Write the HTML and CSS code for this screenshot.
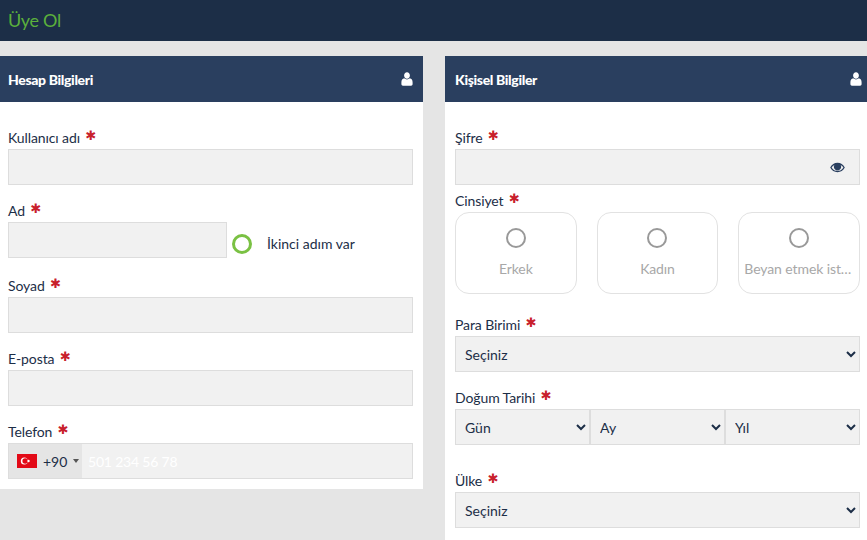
FILE: index.html
```html
<!DOCTYPE html>
<html lang="tr">
<head>
<meta charset="utf-8">
<title>Üye Ol</title>
<link rel="stylesheet" href="styles.css">
</head>
<body>
<header class="topbar"><h1 class="page-title">Üye Ol</h1></header>
<main class="columns">
  <section class="panel panel-left">
    <div class="panel-head"><h2 class="panel-title">Hesap Bilgileri</h2>
      <svg class="user-icon" viewBox="0 0 12 14"><path d="M6 0.3c1.700 0 2.900 1.400 2.900 3.200S7.700 6.800 6 6.800 3.100 5.300 3.100 3.500 4.300.3 6 .3zM3.300 6.300C4 7 5 7.500 6 7.500s2-.5 2.700-1.200c1.900.2 2.900 1.700 2.900 4.100v1.700c0 .9-.7 1.600-1.500 1.600H1.900C1.100 13.700.4 13 .4 12.100v-1.700c0-2.400 1-3.900 2.900-4.100z"/></svg>
    </div>
    <div class="panel-body">
      <div class="field first"><label class="label">Kullanıcı adı <span class="req">✱</span></label><input class="input" type="text"></div>
      <div class="field"><label class="label">Ad <span class="req">✱</span></label>
        <div class="name-row"><input class="input input-short" type="text"><span class="ring"></span><span class="second-step">İkinci adım var</span></div></div>
      <div class="field"><label class="label">Soyad <span class="req">✱</span></label><input class="input" type="text"></div>
      <div class="field"><label class="label">E-posta <span class="req">✱</span></label><input class="input" type="text"></div>
      <div class="field"><label class="label">Telefon <span class="req">✱</span></label>
        <div class="phone">
          <div class="dial">
            <svg class="flag" viewBox="0 0 20 14"><rect width="20" height="14" fill="#e30a17"/><circle cx="7.300" cy="7" r="3.500" fill="#fff"/><circle cx="8.200" cy="7" r="2.800" fill="#e30a17"/><circle cx="11.500" cy="7" r="1.200" fill="#fff"/></svg>
            <span class="dial-code">+90</span><span class="caret"></span>
          </div>
          <input class="phone-input" type="text" placeholder="501 234 56 78">
        </div></div>
    </div>
  </section>
  <section class="panel panel-right">
    <div class="panel-head"><h2 class="panel-title">Kişisel Bilgiler</h2>
      <svg class="user-icon" viewBox="0 0 12 14"><path d="M6 0.3c1.700 0 2.900 1.400 2.900 3.200S7.700 6.800 6 6.800 3.100 5.300 3.100 3.500 4.300.3 6 .3zM3.300 6.300C4 7 5 7.500 6 7.500s2-.5 2.700-1.200c1.900.2 2.900 1.700 2.900 4.100v1.700c0 .9-.7 1.600-1.500 1.600H1.900C1.100 13.700.4 13 .4 12.100v-1.700c0-2.400 1-3.900 2.900-4.100z"/></svg>
    </div>
    <div class="panel-body">
      <div class="field first"><label class="label">Şifre <span class="req">✱</span></label>
        <div class="pw-wrap"><input class="input" type="password">
          <svg class="eye" viewBox="0 0 16 11"><path fill-rule="evenodd" d="M8 .5C4.700.5 1.800 2.400.2 5.500 1.800 8.600 4.700 10.500 8 10.500s6.200-1.900 7.800-5C14.200 2.400 11.300.5 8 .5zM8 9.300C5.400 9.300 3.200 7.900 1.700 5.500 2.500 4.300 3.500 3.300 4.700 2.700 4.300 3.300 4.100 4 4.100 4.800c0 2.200 1.700 3.900 3.900 3.900s3.900-1.700 3.900-3.900c0-.8-.2-1.500-.6-2.100 1.200.6 2.200 1.600 3 2.800-1.500 2.400-3.700 3.800-6.300 3.800z"/></svg>
        </div></div>
      <div class="field gender"><label class="label">Cinsiyet <span class="req">✱</span></label>
        <div class="gender-row">
          <div class="gender-card"><span class="radio"></span><span class="gender-name">Erkek</span></div>
          <div class="gender-card"><span class="radio"></span><span class="gender-name">Kadın</span></div>
          <div class="gender-card"><span class="radio"></span><span class="gender-name">Beyan etmek istemiyorum</span></div>
        </div></div>
      <div class="field currency"><label class="label">Para Birimi <span class="req">✱</span></label><select class="select"><option>Seçiniz</option></select></div>
      <div class="field"><label class="label">Doğum Tarihi <span class="req">✱</span></label>
        <div class="date-row"><select class="select"><option>Gün</option></select><select class="select"><option>Ay</option></select><select class="select"><option>Yıl</option></select></div></div>
      <div class="field country"><label class="label">Ülke <span class="req">✱</span></label><select class="select"><option>Seçiniz</option></select></div>
    </div>
  </section>
</main>
</body>
</html>
```

FILE: styles.css
```css
* { box-sizing: border-box; }
html, body { height: 100%; overflow: hidden; }
body { margin: 0; background: #e5e5e5; font-family: "Lato", "Noto Sans", sans-serif; font-size: 14px; color: #1c2e47; }
.topbar { height: 41px; background: #1c2e47; padding: 0 8px 1px; display: flex; align-items: center; }
.page-title { margin: 0; font-size: 18px; font-weight: 400; letter-spacing: -0.3px; color: #5bb03c; }
.columns { display: grid; grid-template-columns: 423px 423px; column-gap: 22px; margin-top: 15px; align-items: start; }
.panel { background: #fff; }
.panel-left .panel-body { padding: 0 10px 10px 8px; }
.panel-right .panel-body { padding: 0 8px 30px 10px; }
.panel-head { height: 46px; background: #2a3f5f; display: flex; align-items: center; justify-content: space-between; padding: 0 10px 0 8px; }
.panel-right .panel-head { padding: 0 6px 0 10px; }
.panel-title { margin: 0; font-size: 14px; font-weight: 900; letter-spacing: -0.35px; color: #fff; }
.user-icon { width: 12px; height: 14px; fill: #fff; }
.field { margin-top: 14px; }
.field.first { margin-top: 24px; }
.label { display: block; height: 23px; line-height: 24px; white-space: nowrap; letter-spacing: -0.1px; }
.req { font-family: "DejaVu Sans", sans-serif; color: #c8202c; font-size: 13px; line-height: 14px; margin-left: 2px; position: relative; top: -3px; letter-spacing: 0; }
.input, .select { display: block; width: 100%; height: 36px; background: #f1f1f1; border: 1px solid #ddd; border-radius: 0; padding: 0 5px; font: inherit; color: #1c2e47; outline: none; }
.name-row { display: flex; align-items: center; margin-bottom: 16px; }
.input-short { width: 219px; }
.ring { width: 20px; height: 20px; border: 3px solid #7ac143; border-radius: 50%; margin: 8px 0 0 5px; }
.second-step { margin: 7px 0 0 15px; }
.phone { display: flex; height: 36px; border: 1px solid #ddd; background: #f1f1f1; }
.dial { width: 73px; background: #e5e5e5; display: flex; align-items: center; padding-left: 8px; }
.flag { width: 20px; height: 14px; }
.dial-code { margin-left: 6px; }
.caret { margin-left: 6px; border-left: 3px solid transparent; border-right: 3px solid transparent; border-top: 4px solid #555; }
.phone-input { flex: 1; min-width: 0; border: 0; background: transparent; padding: 0 6px; font: inherit; letter-spacing: -0.2px; outline: none; }
.phone-input::placeholder { color: #fff; opacity: 1; }
.pw-wrap { position: relative; }
.eye { position: absolute; right: 15px; top: 13px; width: 15px; height: 11px; fill: #2a3f5f; }
.field.gender { margin-top: 4px; }
.gender-row { display: grid; grid-template-columns: repeat(3, 1fr); column-gap: 20px; }
.gender-card { height: 82px; border: 1px solid #e2e2e2; border-radius: 14px; display: flex; flex-direction: column; align-items: center; padding: 15px 5px 0; min-width: 0; }
.radio { width: 20px; height: 20px; border: 2px solid #999; border-radius: 50%; flex: none; }
.gender-name { margin-top: 12px; color: #a8a8a8; letter-spacing: -0.1px; max-width: 100%; overflow: hidden; white-space: nowrap; text-overflow: ellipsis; }
.field.currency { margin-top: 19px; }
.date-row { display: grid; grid-template-columns: repeat(3, 1fr); }
.field.country { margin-top: 24px; }
```
